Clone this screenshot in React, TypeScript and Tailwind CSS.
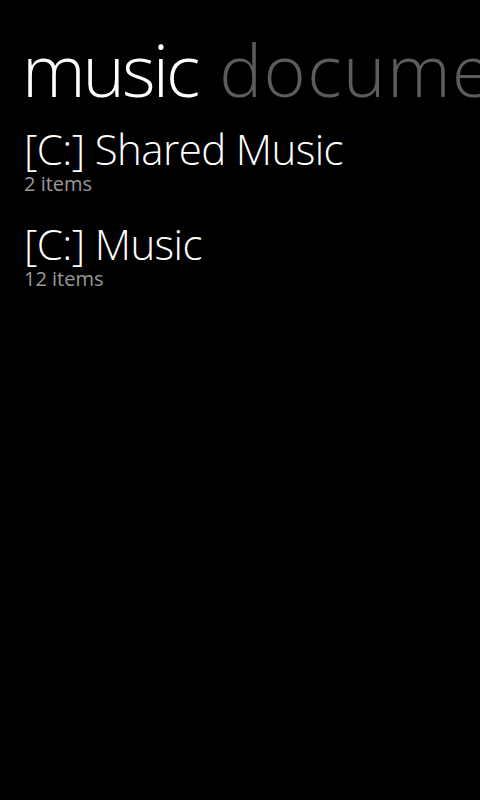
export default function App() {
  const font = { fontFamily: '"Open Sans", "Noto Sans", sans-serif' };
  return (
    <div className="w-[480px] h-[800px] bg-black overflow-hidden text-white" style={font}>
      <div className="flex whitespace-nowrap overflow-hidden pl-[22px] pt-[24px] text-[72px] leading-[90px] font-light">
        <span className="text-white tracking-[-3px]">music</span>
        <span className="ml-[22px] text-[#5c5c5c] tracking-[1.5px]">documents</span>
      </div>
      <div className="flex flex-col pl-[24px] pt-[13px]">
        <div className="flex flex-col mb-[25px]">
          <span className="text-[42px] leading-[44px] font-light tracking-[-0.6px]">[C:] Shared Music</span>
          <span className="text-[20px] leading-[26px] text-[#999999]">2 items</span>
        </div>
        <div className="flex flex-col">
          <span className="text-[42px] leading-[44px] font-light tracking-[-0.6px]">[C:] Music</span>
          <span className="text-[20px] leading-[26px] text-[#999999]">12 items</span>
        </div>
      </div>
    </div>
  );
}
